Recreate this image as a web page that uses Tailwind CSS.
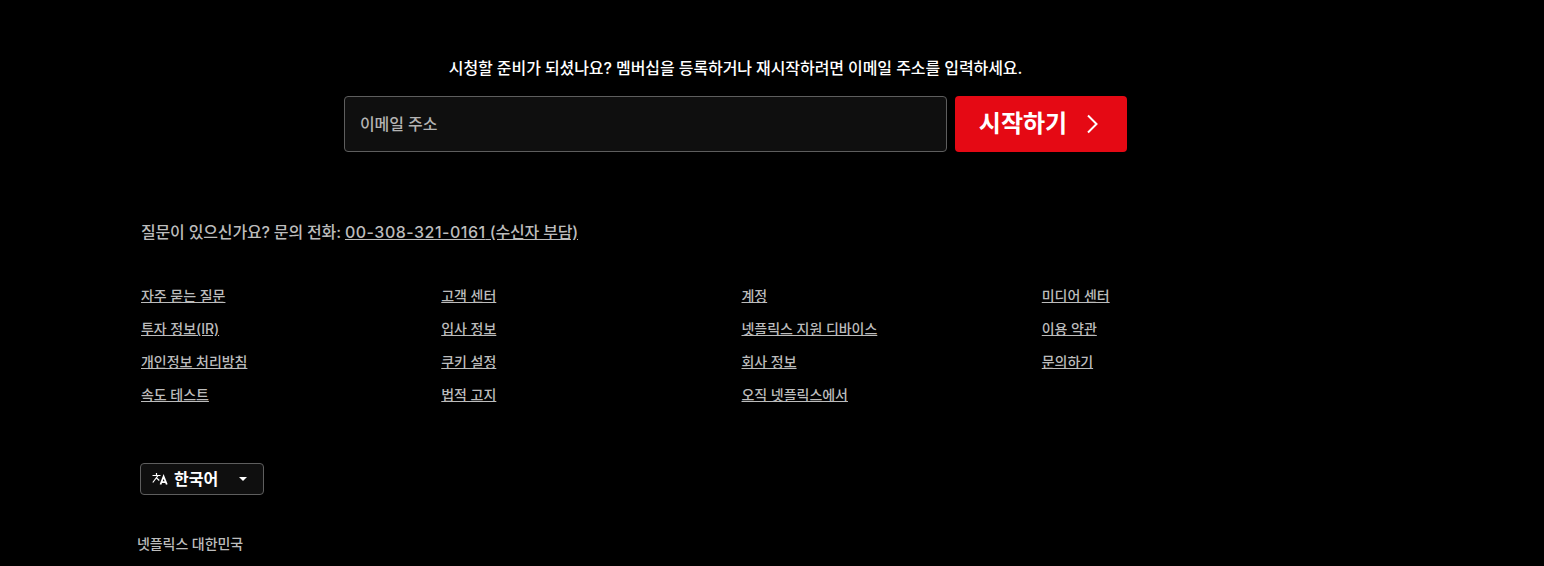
<!DOCTYPE html>
<html lang="ko">
<head>
    <meta charset="UTF-8">
    <meta name="viewport" content="width=device-width, initial-scale=1.0">
    <title>넷플릭스 대한민국</title>
    <script src="https://cdn.jsdelivr.net/npm/@tailwindcss/browser@4"></script>
</head>
<body class="bg-black h-[566px] overflow-hidden font-['Inter','Noto_Sans_CJK_KR',sans-serif] text-[#bcbcbc]">
    <section class="w-[1471px] pt-[57px] flex flex-col items-center">
        <h3 class="text-white text-[16px] leading-[22px] font-medium tracking-[-0.085px]">시청할 준비가 되셨나요? 멤버십을 등록하거나 재시작하려면 이메일 주소를 입력하세요.</h3>
        <form class="mt-[17px] flex gap-2">
            <input type="text" placeholder="이메일 주소" class="w-[603px] h-[56px] px-[15px] bg-[#0f0f0f] border border-[#5e5e5e] rounded text-[16px] font-medium tracking-[-0.1px] placeholder:text-[#b3b3b3] outline-none">
            <button type="button" class="w-[172px] h-[56px] pr-[2px] bg-[#e50914] rounded flex items-center justify-center gap-[18px] text-white text-[24px] font-semibold">
                시작하기
                <svg width="16" height="24" viewBox="0 0 16 24" fill="none" stroke="currentColor" stroke-width="2"><path d="M3 3.500 11.500 12 3 20.500"/></svg>
            </button>
        </form>
    </section>

    <footer class="pl-[141px] pt-[68px] w-[1342px]">
        <p class="text-[16px] leading-[24px] font-medium tracking-[-0.17px]">질문이 있으신가요? 문의 전화: <a href="#" class="underline"><span class="tracking-[0.5px]">00-308-321-0161</span> (수신자 부담)</a></p>

        <ul class="mt-[42px] grid grid-cols-4 gap-y-[13px] text-[14px] leading-[20px] font-medium tracking-[-0.04px]">
            <li><a href="#" class="underline">자주 묻는 질문</a></li>
            <li><a href="#" class="underline">고객 센터</a></li>
            <li><a href="#" class="underline">계정</a></li>
            <li><a href="#" class="underline">미디어 센터</a></li>
            <li><a href="#" class="underline">투자 정보(IR)</a></li>
            <li><a href="#" class="underline">입사 정보</a></li>
            <li><a href="#" class="underline">넷플릭스 지원 디바이스</a></li>
            <li><a href="#" class="underline">이용 약관</a></li>
            <li><a href="#" class="underline">개인정보 처리방침</a></li>
            <li><a href="#" class="underline">쿠키 설정</a></li>
            <li><a href="#" class="underline">회사 정보</a></li>
            <li><a href="#" class="underline">문의하기</a></li>
            <li><a href="#" class="underline">속도 테스트</a></li>
            <li><a href="#" class="underline">법적 고지</a></li>
            <li><a href="#" class="underline">오직 넷플릭스에서</a></li>
        </ul>

        <button type="button" class="mt-[58px] -ml-px w-[124px] h-[32px] flex items-center pl-[11px] bg-[#0f0f0f] border border-[#5e5e5e] rounded text-white text-[16px] font-semibold">
            <svg width="16" height="16" viewBox="0 0 16 16" fill="none" stroke="currentColor"><path stroke-width="1.200" d="M0.500 4.500H8.500M4.500 2V4.500M6 4.500 0.800 11.500M4 6.500 7.300 9.500"/><path stroke-width="1.800" d="M8.500 13.500 11.600 5.500 14.800 13.500M9.500 11.200H13.800"/></svg>
            <span class="ml-[6px]">한국어</span>
            <svg class="ml-[20px]" width="10" height="6" viewBox="0 0 10 6" fill="currentColor"><path d="M1 1h8L5 5Z"/></svg>
        </button>

        <p class="mt-[39px] -ml-[4px] text-[14px] leading-[20px] font-medium tracking-[-0.08px]">넷플릭스 대한민국</p>
    </footer>
</body>
</html>
